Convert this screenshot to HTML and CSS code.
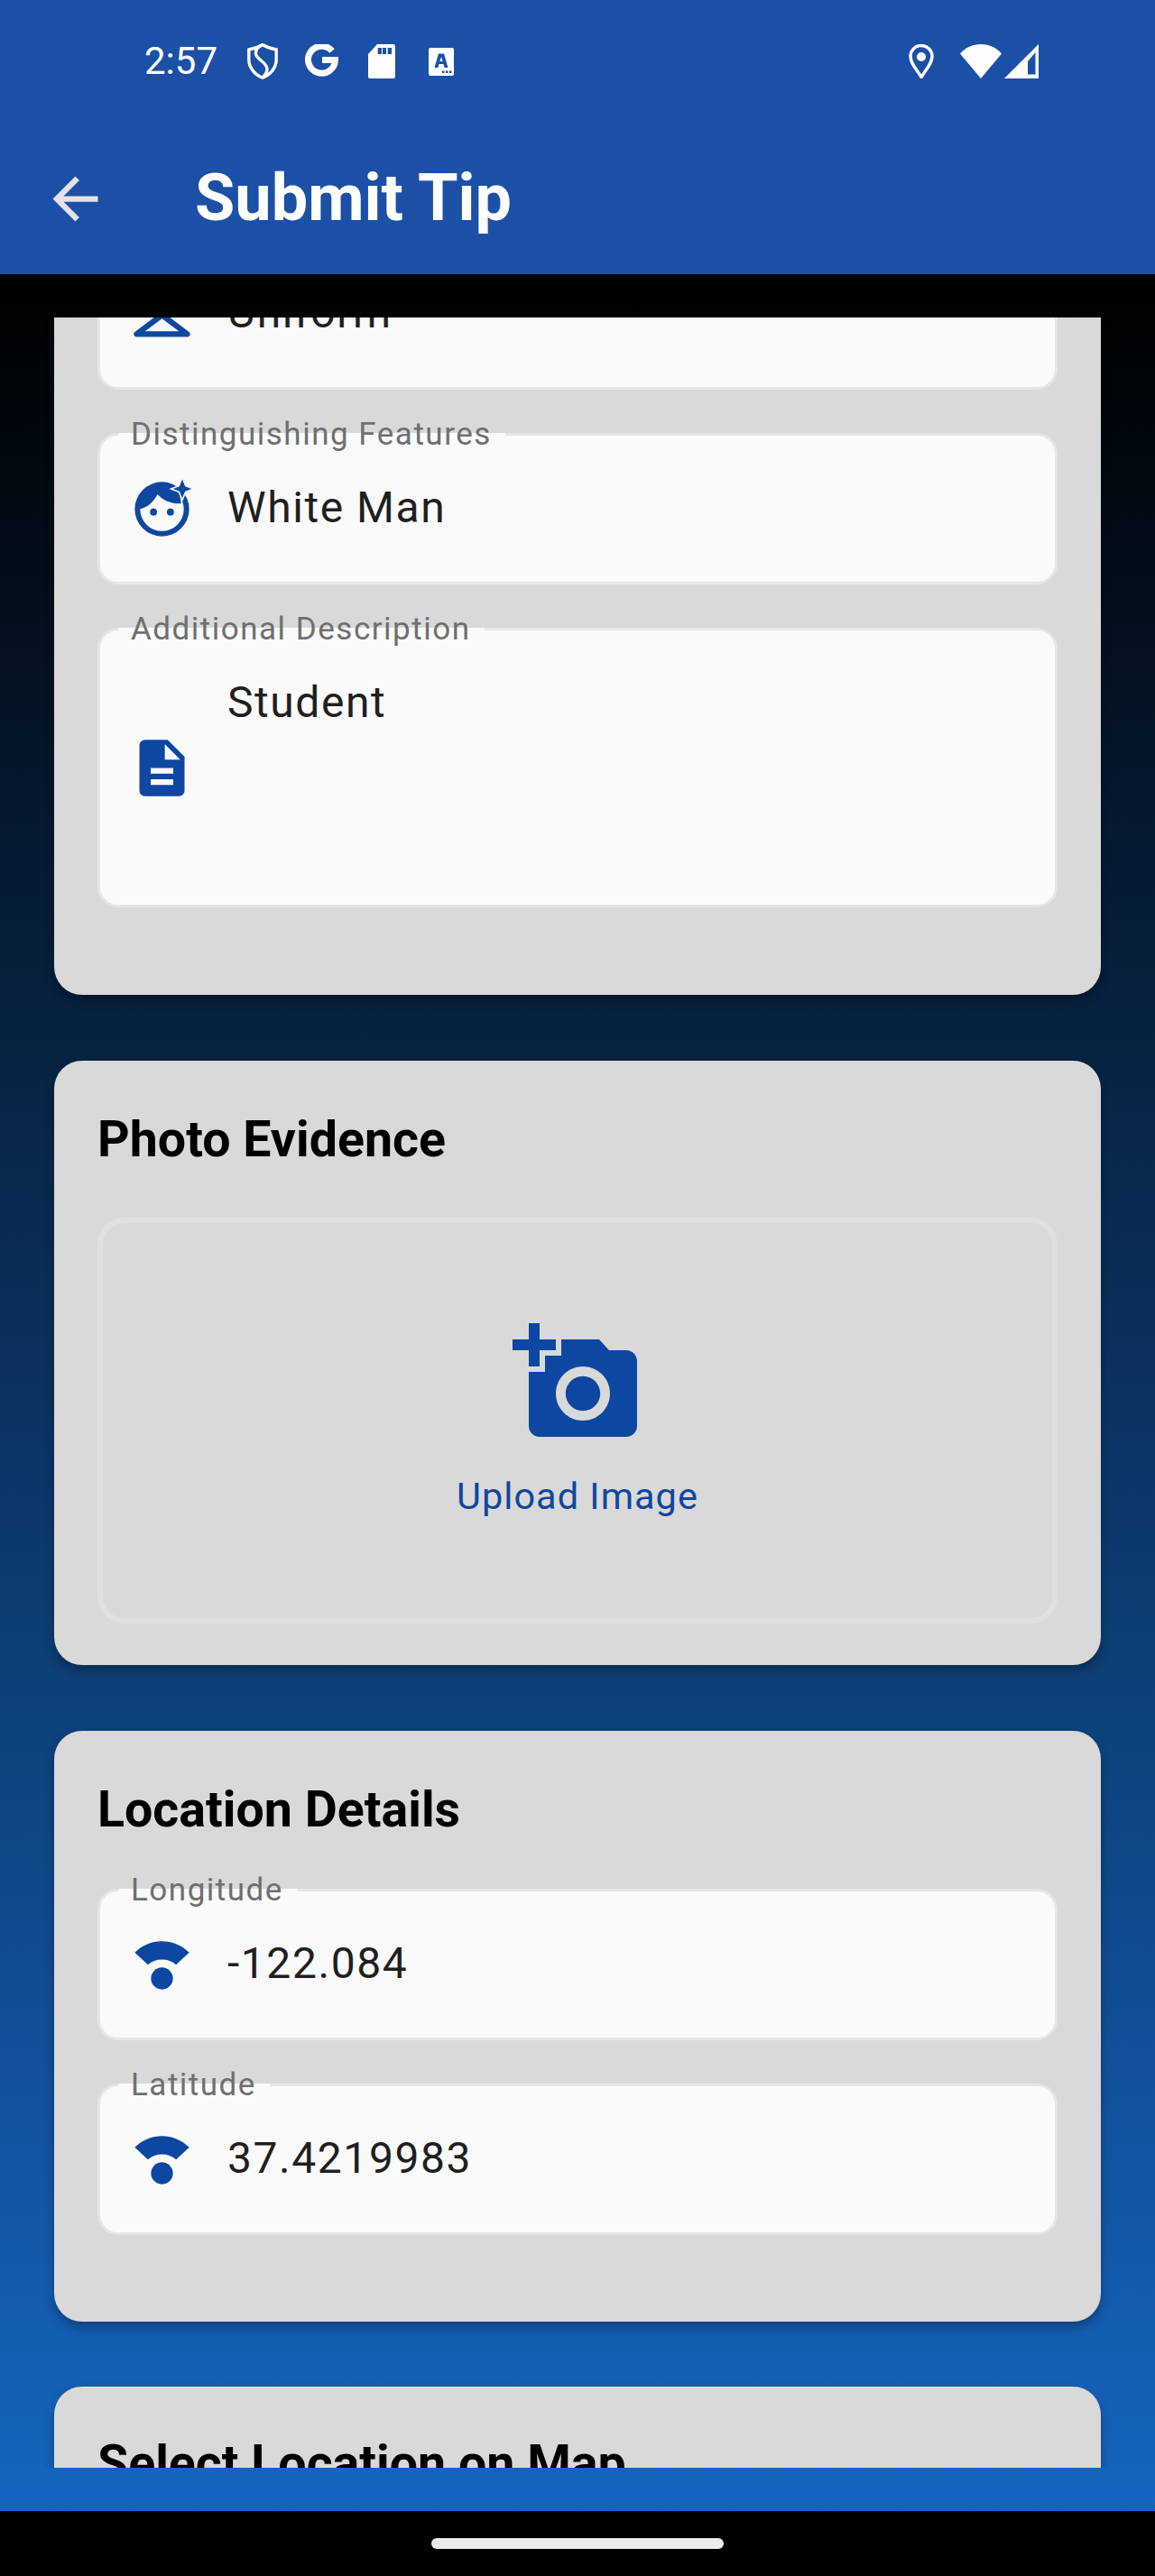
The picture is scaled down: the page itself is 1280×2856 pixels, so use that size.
FILE: index.html
```html
<!DOCTYPE html>
<html lang="en">
<head>
<meta charset="utf-8">
<title>Submit Tip</title>
<link rel="stylesheet" href="styles.css">
</head>
<body>
<div class="phone">
  <header class="appbar">
    <div class="status">
      <span class="time">2:57</span>
      <svg class="st st-shield" viewBox="0 0 34 40"><path class="ln" d="M17 1.500C21 4 26 6 32.200 7V18C32.200 27 26 34.500 17 38.300C8 34.500 1.800 27 1.800 18V7C8 6 13 4 17 1.500z"/><path class="ln" d="M15 2.500C9.500 5 8 11 11 15C14 19 21 22 22 28C22.500 31 20 35 17 38"/></svg>
      <svg class="st st-g" viewBox="0 0 37 38"><path class="gl" d="M30 7.500A15 15 0 1 0 33.500 17.500H19"/></svg>
      <svg class="st st-sd" viewBox="0 0 30 38"><path class="solid" fill-rule="evenodd" d="M10 0h18a2 2 0 0 1 2 2v34a2 2 0 0 1-2 2H2a2 2 0 0 1-2-2V11zM10.700 4v7h4.300V4zm5.300 0v7h4V4zm5.700 0v7H26V4z"/></svg>
      <svg class="st st-a" viewBox="0 0 28 31"><path class="solid" fill-rule="evenodd" d="M2 0h24a2 2 0 0 1 2 2v27a2 2 0 0 1-2 2H2a2 2 0 0 1-2-2V2a2 2 0 0 1 2-2zM11 6.500 6.500 22h4l1-4h5l1 4h4L17 6.500zM14 10l1.700 5h-3.400zM15 25.500v2.500h2.500v-2.500zm4 0v2.500h2.500v-2.500zm4 0v2.500h2.500v-2.500z"/></svg>
      <span class="status-gap"></span>
      <svg class="st st-pin" viewBox="0 0 28 38"><path class="ln" d="M14 36.500C8 27 2 21 2 13.500a12 12 0 0 1 24 0C26 21 20 27 14 36.500z"/><circle class="solid" cx="14" cy="14" r="5"/></svg>
      <svg class="st st-wifi" viewBox="0 0 46 38"><path class="solid" d="M0 10.500C6 3.500 14 0 23 0s17 3.500 23 10.500L23 38z"/></svg>
      <svg class="st st-signal" viewBox="0 0 38 38"><path class="solid" fill-rule="evenodd" d="M38 0v38H0zM34.500 9 26 19v14.500h8.500z"/></svg>
    </div>
    <div class="toolbar">
      <svg class="back" viewBox="0 0 24 24"><path d="M20 11H7.830l5.590-5.590L12 4l-8 8 8 8 1.410-1.410L7.830 13H20v-2z"/></svg>
      <h1 class="title">Submit Tip</h1>
    </div>
  </header>

  <main class="body">
    <div class="clip">
      <div class="scroll">
        <section class="card card-first">
          <div class="field">
            <label class="label">Uniform Type</label>
            <svg class="icon" viewBox="0 0 24 24"><path d="M21.600 18.200 13 11.750v-.91c1.650-.49 2.800-2.170 2.430-4.050-.26-1.310-1.300-2.400-2.610-2.700C10.540 3.570 8.500 5.300 8.500 7.500h2c0-.83.67-1.500 1.500-1.500s1.500.67 1.500 1.500c0 .84-.69 1.520-1.530 1.500-.54-.01-.97.45-.97.99v1.760L2.400 18.200c-.77.58-.36 1.800.6 1.800h18c.96 0 1.370-1.220.6-1.800zM6 18l6-4.500 6 4.500H6z"/></svg>
            <span class="value">Uniform</span>
          </div>
          <div class="field">
            <label class="label">Distinguishing Features</label>
            <svg class="icon" viewBox="0 0 24 24">
              <path fill-rule="evenodd" d="M12 2.350a9.650 9.650 0 1 1 0 19.300a9.650 9.650 0 0 1 0-19.300zM12 4.250a7.750 7.750 0 1 0 0 15.500a7.750 7.750 0 0 0 0-15.500z"/>
              <path d="M3.800 12C6.800 11.500 9 9.500 10.400 6.700C12.500 9 15.500 10.200 18.800 10L18 4.500L12 3L5 6z"/>
              <circle cx="9" cy="13" r="1.250"/><circle cx="15" cy="13" r="1.250"/>
              <path class="star" d="M19.200 1.400 20.200 3.900 22.500 4.800 20.200 5.700 19.200 8.100 18.200 5.700 15.900 4.800 18.200 3.900z"/>
            </svg>
            <span class="value">White Man</span>
          </div>
          <div class="field field-tall">
            <label class="label">Additional Description</label>
            <svg class="icon" viewBox="0 0 24 24"><path d="M14 2H6c-1.100 0-1.990.9-1.990 2L4 20c0 1.100.89 2 1.990 2H18c1.100 0 2-.9 2-2V8l-6-6zm2 16H8v-2h8v2zm0-4H8v-2h8v2zm-3-5V3.500L18.500 9H13z"/></svg>
            <span class="value">Student</span>
          </div>
        </section>

        <section class="card card-photo">
          <h2 class="heading heading-photo">Photo Evidence</h2>
          <div class="upload">
            <svg class="upload-icon" viewBox="0 0 24 24"><path d="M3 4V1h2v3h3v2H5v3H3V6H0V4h3zm3 6V7h3V4h7l1.830 2H21c1.100 0 2 .9 2 2v12c0 1.100-.9 2-2 2H5c-1.100 0-2-.9-2-2V10h3zm7 9c2.760 0 5-2.240 5-5s-2.240-5-5-5-5 2.240-5 5 2.240 5 5 5zm-3.200-5c0 1.770 1.430 3.200 3.200 3.200s3.200-1.430 3.200-3.200-1.430-3.200-3.200-3.200-3.200 1.430-3.200 3.200z"/></svg>
            <span class="upload-text">Upload Image</span>
          </div>
        </section>

        <section class="card">
          <h2 class="heading">Location Details</h2>
          <div class="field">
            <label class="label">Longitude</label>
            <svg class="icon" viewBox="0 0 24 24"><path d="M2.350 7.600C5 5 8.400 3.600 12 3.600S19 5 21.650 7.600L17 11.900C15.600 10.700 13.900 10.100 12 10.100S8.400 10.700 7 11.900z"/><circle cx="12" cy="16.800" r="3.900"/></svg>
            <span class="value">-122.084</span>
          </div>
          <div class="field">
            <label class="label">Latitude</label>
            <svg class="icon" viewBox="0 0 24 24"><path d="M2.350 7.600C5 5 8.400 3.600 12 3.600S19 5 21.650 7.600L17 11.900C15.600 10.700 13.900 10.100 12 10.100S8.400 10.700 7 11.900z"/><circle cx="12" cy="16.800" r="3.900"/></svg>
            <span class="value">37.4219983</span>
          </div>
        </section>

        <section class="card card-map">
          <h2 class="heading">Select Location on Map</h2>
        </section>
      </div>
    </div>
  </main>

  <footer class="navbar"><span class="pill"></span></footer>
</div>
</body>
</html>
```

FILE: styles.css
```css
* { box-sizing: border-box; }
html, body { margin: 0; padding: 0; }
body { width: 1280px; height: 2856px; font-family: Roboto, "Liberation Sans", sans-serif; background: #000; overflow: hidden; }
.phone { display: flex; flex-direction: column; height: 2856px; }

.appbar { height: 304px; flex: none; background: #1c50a7; color: #fff; }
.status { height: 136px; display: flex; align-items: center; padding-left: 160px; }
.time { font-size: 42px; line-height: 48px; width: 114px; color: #fff; }
.st { display: block; flex: none; }
.ln { fill: none; stroke: #fff; stroke-width: 3.400; }
.solid { fill: #fff; }
.gl { fill: none; stroke: #fff; stroke-width: 7; }
.st-shield { width: 34px; height: 40px; margin-right: 30px; }
.st-g { width: 37px; height: 38px; margin-right: 33px; }
.st-sd { width: 30px; height: 38px; margin-right: 37px; }
.st-a { width: 28px; height: 31px; }
.status-gap { flex: 1; }
.st-pin { width: 28px; height: 38px; margin-right: 29px; }
.st-wifi { width: 46px; height: 38px; margin-right: 3px; }
.st-signal { width: 38px; height: 38px; margin-right: 129px; }

.toolbar { height: 168px; display: flex; align-items: center; padding-left: 46px; }
.back { width: 75px; height: 75px; fill: #e6e0e9; margin-right: 95px; flex: none; }
.title { margin: 0; font-size: 72px; line-height: 84px; font-weight: 700; color: #fff; }

.body { flex: 1; min-height: 0; padding: 48px 0; background: linear-gradient(180deg, #000 0%, #1565c0 100%); }
.clip { height: 100%; overflow: hidden; padding: 0 60px; }
.scroll { margin-top: -136px; display: flex; flex-direction: column; gap: 73px; }

.card { background: #d9d9d9; border-radius: 31px; padding: 52px 48px 48px; box-shadow: 0 6px 12px rgba(0, 0, 0, .3); }
.card-first { padding-top: 48px; padding-bottom: 49px; }
.card-photo { padding-bottom: 46px; }
.card-map { margin-top: -1px; height: 300px; padding-top: 50px; }
.heading { margin: 0; font-size: 55.500px; line-height: 72px; font-weight: 700; color: #000; }
.heading-photo { margin-bottom: 50px; }
.heading + .field { margin-top: 51px; }

.field { position: relative; height: 168px; margin-bottom: 48px; display: flex; align-items: center; padding-left: 31px; background: #fafafa; border: 3px solid #e6e6e6; border-radius: 23px; }
.field-tall { height: 310px; }
.field-tall .value { align-self: flex-start; margin-top: 53px; padding-bottom: 0; }
.label { position: absolute; left: 21px; top: -31px; height: 60px; padding: 0 15px 0 13px; font-size: 35px; line-height: 60px; letter-spacing: 1.500px; color: #6f6f6f; background: linear-gradient(180deg, transparent 0, transparent 28px, #fafafa 28px); white-space: nowrap; }
.icon { width: 75px; height: 75px; fill: #0d47a1; flex: none; margin-right: 35px; }
.star { stroke: #fafafa; stroke-width: 1; paint-order: stroke; }
.value { font-size: 48px; line-height: 54px; letter-spacing: 1.560px; color: #1f1f1f; padding-bottom: 2px; }

.upload { height: 450px; border: 6px solid #e0e0e0; border-radius: 30px; display: flex; flex-direction: column; align-items: center; padding-top: 105px; }
.upload-icon { width: 144px; height: 144px; fill: #0d47a1; flex: none; }
.upload-text { margin-top: 28px; font-size: 41.500px; line-height: 52px; letter-spacing: 1px; color: #0d47a1; }

.navbar { height: 72px; flex: none; background: #000; display: flex; justify-content: center; padding-top: 30px; }
.pill { width: 324px; height: 12px; border-radius: 6px; background: #ebebeb; }
```
